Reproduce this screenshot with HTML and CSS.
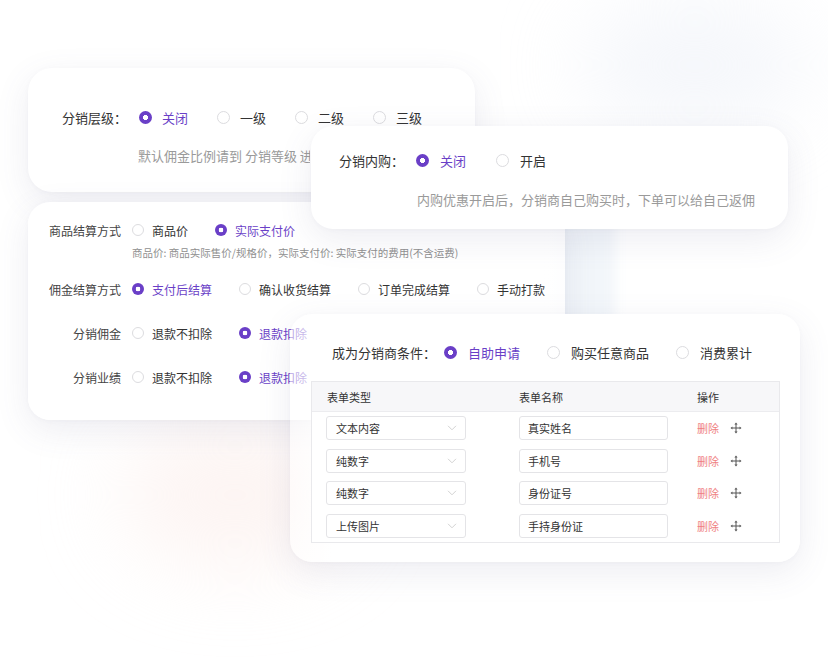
FILE: index.html
```html
<!DOCTYPE html>
<html lang="zh-CN">
<head>
<meta charset="utf-8">
<title>分销设置</title>
<link rel="stylesheet" href="styles.css">
</head>
<body>
<div class="stage">
  <div class="glow glow-pink"></div>
  <div class="glow glow-blue"></div>
  <div class="glow glow-side"></div>

  <section class="card card-level">
    <div class="row">
      <span class="label">分销层级：</span>
      <span class="opt on"><i class="radio"></i>关闭</span>
      <span class="opt"><i class="radio"></i>一级</span>
      <span class="opt"><i class="radio"></i>二级</span>
      <span class="opt"><i class="radio"></i>三级</span>
    </div>
    <p class="desc">默认佣金比例请到 分销等级 进行设置</p>
  </section>

  <section class="card card-settle">
    <div class="row">
      <span class="label">商品结算方式</span>
      <span class="opt"><i class="radio"></i>商品价</span>
      <span class="opt on"><i class="radio"></i>实际支付价</span>
    </div>
    <p class="desc">商品价: 商品实际售价/规格价，实际支付价: 实际支付的费用(不含运费)</p>
    <div class="row r2">
      <span class="label">佣金结算方式</span>
      <span class="opt on"><i class="radio"></i>支付后结算</span>
      <span class="opt"><i class="radio"></i>确认收货结算</span>
      <span class="opt"><i class="radio"></i>订单完成结算</span>
      <span class="opt"><i class="radio"></i>手动打款</span>
    </div>
    <div class="row r3">
      <span class="label">分销佣金</span>
      <span class="opt"><i class="radio"></i>退款不扣除</span>
      <span class="opt on"><i class="radio"></i>退款扣除</span>
    </div>
    <div class="row r3">
      <span class="label">分销业绩</span>
      <span class="opt"><i class="radio"></i>退款不扣除</span>
      <span class="opt on"><i class="radio"></i>退款扣除</span>
    </div>
  </section>

  <section class="card card-inner">
    <div class="row">
      <span class="label">分销内购：</span>
      <span class="opt on"><i class="radio"></i>关闭</span>
      <span class="opt"><i class="radio"></i>开启</span>
    </div>
    <p class="desc">内购优惠开启后，分销商自己购买时，下单可以给自己返佣</p>
  </section>

  <section class="card card-cond">
    <div class="row">
      <span class="label">成为分销商条件：</span>
      <span class="opt on"><i class="radio"></i>自助申请</span>
      <span class="opt"><i class="radio"></i>购买任意商品</span>
      <span class="opt"><i class="radio"></i>消费累计</span>
    </div>
    <div class="table">
      <div class="tr th">
        <div class="td">表单类型</div>
        <div class="td">表单名称</div>
        <div class="td">操作</div>
      </div>
      <div class="tr">
        <div class="td"><div class="select">文本内容<svg class="chev" width="10" height="6" viewBox="0 0 10 6"><path d="M1 .8l4 4 4-4" fill="none" stroke="#d2d2d2" stroke-width="1"/></svg></div></div>
        <div class="td"><div class="input">真实姓名</div></div>
        <div class="td ops"><span class="del">删除</span><svg class="move" width="12" height="12" viewBox="0 0 12 12"><path d="M6 2v8M2 6h8" stroke="#555" stroke-width="1"/><path d="M6 0.5L4.4 2.4h3.2zM6 11.5L4.4 9.6h3.2zM0.5 6L2.4 4.4v3.2zM11.5 6L9.6 4.4v3.2z" fill="#555"/></svg></div>
      </div>
      <div class="tr">
        <div class="td"><div class="select">纯数字<svg class="chev" width="10" height="6" viewBox="0 0 10 6"><path d="M1 .8l4 4 4-4" fill="none" stroke="#d2d2d2" stroke-width="1"/></svg></div></div>
        <div class="td"><div class="input">手机号</div></div>
        <div class="td ops"><span class="del">删除</span><svg class="move" width="12" height="12" viewBox="0 0 12 12"><path d="M6 2v8M2 6h8" stroke="#555" stroke-width="1"/><path d="M6 0.5L4.4 2.4h3.2zM6 11.5L4.4 9.6h3.2zM0.5 6L2.4 4.4v3.2zM11.5 6L9.6 4.4v3.2z" fill="#555"/></svg></div>
      </div>
      <div class="tr">
        <div class="td"><div class="select">纯数字<svg class="chev" width="10" height="6" viewBox="0 0 10 6"><path d="M1 .8l4 4 4-4" fill="none" stroke="#d2d2d2" stroke-width="1"/></svg></div></div>
        <div class="td"><div class="input">身份证号</div></div>
        <div class="td ops"><span class="del">删除</span><svg class="move" width="12" height="12" viewBox="0 0 12 12"><path d="M6 2v8M2 6h8" stroke="#555" stroke-width="1"/><path d="M6 0.5L4.4 2.4h3.2zM6 11.5L4.4 9.6h3.2zM0.5 6L2.4 4.4v3.2zM11.5 6L9.6 4.4v3.2z" fill="#555"/></svg></div>
      </div>
      <div class="tr">
        <div class="td"><div class="select">上传图片<svg class="chev" width="10" height="6" viewBox="0 0 10 6"><path d="M1 .8l4 4 4-4" fill="none" stroke="#d2d2d2" stroke-width="1"/></svg></div></div>
        <div class="td"><div class="input">手持身份证</div></div>
        <div class="td ops"><span class="del">删除</span><svg class="move" width="12" height="12" viewBox="0 0 12 12"><path d="M6 2v8M2 6h8" stroke="#555" stroke-width="1"/><path d="M6 0.5L4.4 2.4h3.2zM6 11.5L4.4 9.6h3.2zM0.5 6L2.4 4.4v3.2zM11.5 6L9.6 4.4v3.2z" fill="#555"/></svg></div>
      </div>
    </div>
  </section>
</div>
</body>
</html>
```

FILE: styles.css
```css
html, body {
  margin: 0;
  padding: 0;
  background: #ffffff;
}

.stage {
  position: relative;
  width: 828px;
  height: 666px;
  overflow: hidden;
  background: #ffffff;
  font-family: "Noto Sans CJK SC", "Noto Sans", sans-serif;
  color: #333333;
}

/* soft background glows */
.glow {
  position: absolute;
  border-radius: 50%;
  filter: blur(40px);
}
.glow-pink {
  left: 120px;
  top: 420px;
  width: 230px;
  height: 150px;
  background: rgba(250, 232, 228, 0.45);
}
.glow-blue {
  left: 580px;
  top: 0px;
  width: 230px;
  height: 130px;
  background: rgba(232, 237, 247, 0.45);
}
.glow-side {
  left: 555px;
  top: 212px;
  width: 60px;
  height: 112px;
  border-radius: 10px;
  filter: blur(6px);
  background: rgba(232, 238, 246, 0.55);
}

/* cards */
.card {
  position: absolute;
  box-sizing: border-box;
  background: #ffffff;
  box-shadow: 0 10px 34px rgba(95, 95, 140, 0.11), 0 1px 4px rgba(95, 95, 140, 0.04);
}

.row {
  display: flex;
  align-items: center;
  height: 20px;
  white-space: nowrap;
}

.label {
  flex: none;
}

.opt {
  display: flex;
  align-items: center;
}

.radio {
  display: block;
  box-sizing: border-box;
  border-radius: 50%;
  border: 1px solid #dcdcdf;
  background: #fff;
  flex: none;
}

.opt.on {
  color: #6a3fc7;
}
.opt.on .radio {
  border: none;
  background: radial-gradient(circle, #ffffff 0 2.3px, #6a3fc7 2.8px);
}

.desc {
  margin: 0;
  color: #9a9a9a;
  white-space: nowrap;
}

/* card 1: level */
.card-level {
  left: 28px;
  top: 68px;
  width: 447px;
  height: 124px;
  border-radius: 24px;
  padding: 39px 0 0 34px;
  font-size: 13px;
}
.card-level .label { width: 65px; margin-right: 12px; }
.card-level .radio { width: 13px; height: 13px; margin-right: 10px; }
.card-level .opt { margin-right: 29px; }
.card-level .desc {
  margin: 19px 0 0 76px;
  width: 172px;
  overflow: hidden;
  line-height: 20px;
  font-size: 13px;
}

/* card 2: inner purchase */
.card-inner {
  left: 311px;
  top: 126px;
  width: 477px;
  height: 103px;
  border-radius: 22px;
  padding: 24px 0 0 28px;
  font-size: 13px;
}
.card-inner .label { width: 65px; margin-right: 12px; }
.card-inner .radio { width: 13px; height: 13px; margin-right: 11px; }
.card-inner .opt { margin-right: 30px; }
.card-inner .desc {
  margin: 20px 0 0 78px;
  line-height: 20px;
  font-size: 13px;
}

/* card 3: settlement */
.card-settle {
  left: 28px;
  top: 202px;
  width: 537px;
  height: 218px;
  border-radius: 22px;
  padding: 18px 0 0 20px;
  font-size: 12px;
  background: linear-gradient(90deg, #ffffff 0%, #ffffff 85%, rgba(255, 255, 255, 0.9) 100%);
}
.card-settle .label {
  width: 73px;
  text-align: right;
  margin-right: 11px;
  color: #444;
}
.card-settle .radio { width: 12px; height: 12px; margin-right: 8px; }
.card-settle .opt { margin-right: 27px; }
.card-settle .opt.on .radio {
  background: radial-gradient(circle, #ffffff 0 2.1px, #6a3fc7 2.6px);
}
.card-settle .desc {
  margin: 5px 0 0 84px;
  font-size: 10.5px;
  line-height: 16px;
  color: #8f8f8f;
}
.card-settle .r2 { margin-top: 18px; }
.card-settle .r3 { margin-top: 24px; }

/* card 4: conditions */
.card-cond {
  left: 290px;
  top: 314px;
  width: 510px;
  height: 248px;
  border-radius: 22px;
  padding: 28px 20px 0 21px;
  font-size: 13px;
  background: linear-gradient(90deg, rgba(255, 255, 255, 0.5) 0px, rgba(255, 255, 255, 0.72) 22px, #ffffff 44px);
}
.card-cond .row { padding-left: 21px; }
.card-cond .label { width: 104px; margin-right: 8px; }
.card-cond .radio { width: 13px; height: 13px; margin-right: 11px; }
.card-cond .opt { margin-right: 27px; }

.table {
  margin-top: 19px;
  border: 1px solid #e9e9ec;
  background: #ffffff;
  font-size: 11px;
}
.tr {
  display: grid;
  grid-template-columns: 192px 178px 1fr;
  align-items: center;
  height: 32.5px;
}
.th {
  height: 29px;
  background: #f7f7f9;
  border-bottom: 1px solid #ececef;
}
.th .td { padding-left: 15px; }
.td { padding-left: 14px; }
.tr .td:nth-child(2) { padding-left: 15px; }

.select, .input {
  box-sizing: border-box;
  height: 24px;
  border: 1px solid #e4e4e7;
  border-radius: 3px;
  display: flex;
  align-items: center;
  background: #fff;
  color: #333;
}
.select {
  width: 140px;
  padding: 0 8px 0 9px;
  justify-content: space-between;
}
.input {
  width: 149px;
  padding-left: 8px;
}
.ops {
  display: flex;
  align-items: center;
  padding-left: 15px !important;
}
.del {
  color: #ef7f7f;
  margin-right: 11px;
}
.move { display: block; }
```
